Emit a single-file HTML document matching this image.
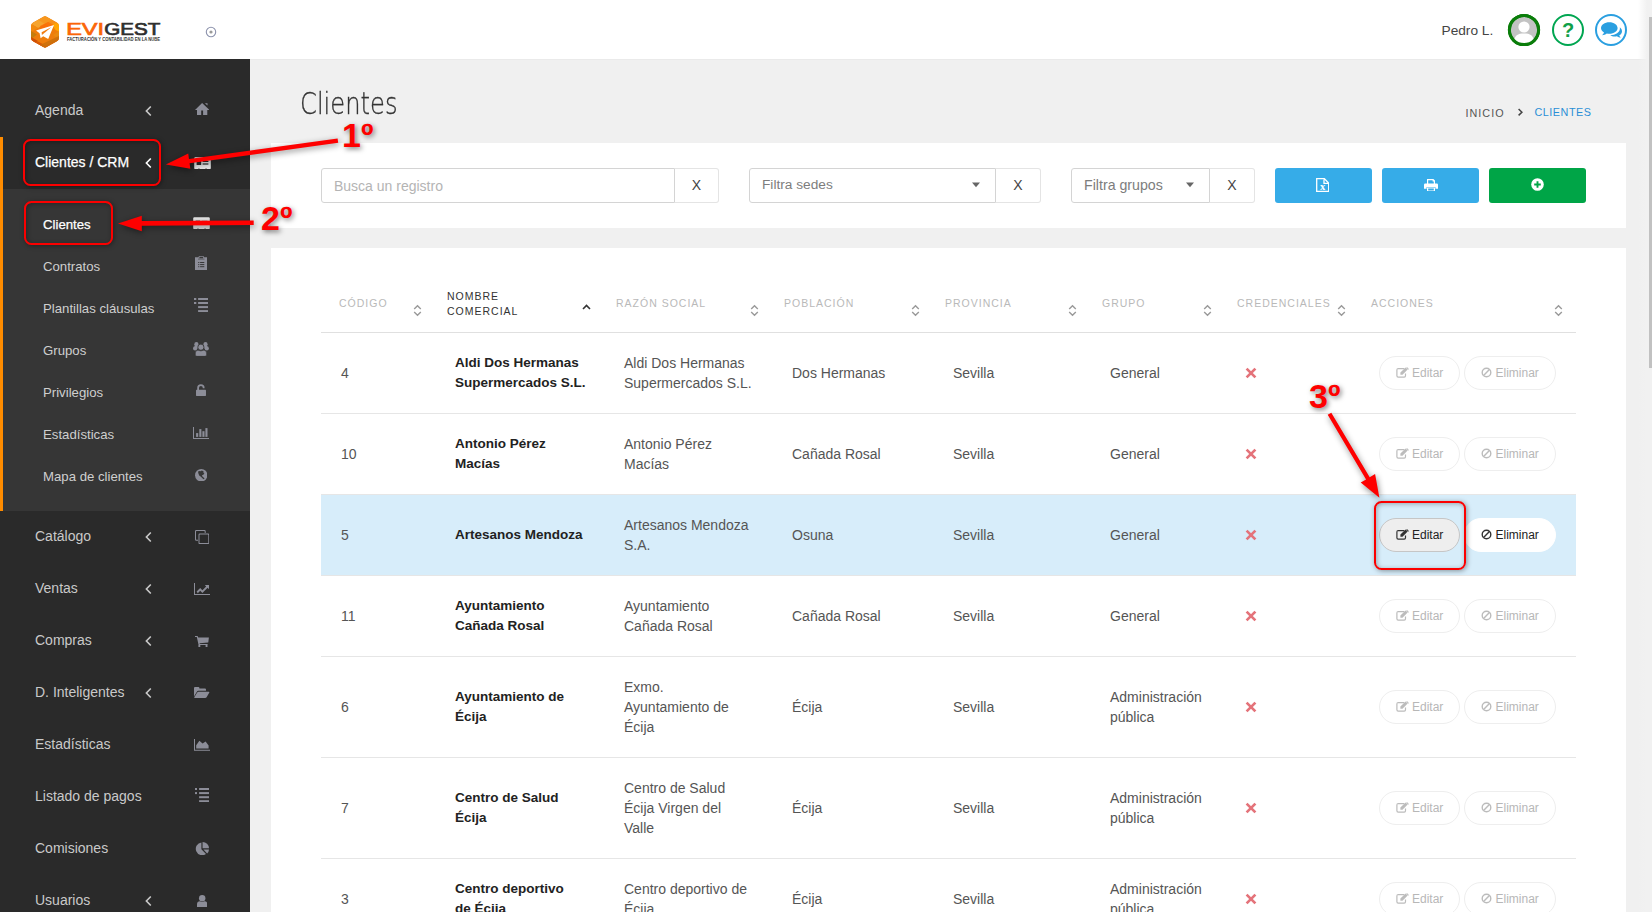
<!DOCTYPE html>
<html lang="es"><head><meta charset="utf-8"><title>Clientes</title>
<style>
*{box-sizing:border-box;margin:0;padding:0}
html,body{width:1652px;height:912px;overflow:hidden;background:#f0f0f0;font-family:"Liberation Sans",sans-serif;color:#444}
body{position:relative}
.a{position:absolute}
.t{position:absolute;white-space:nowrap;line-height:20px}
#hdr{left:0;top:0;width:1647px;height:59px;background:#fff}
#side{left:0;top:59px;width:250px;height:853px;background:#2a2a2a}
#sub{left:0;top:189px;width:250px;height:322px;background:#363636}
#obar{left:0;top:137px;width:3px;height:374px;background:#ff8c00}
.mi{left:35px;font-size:14px;color:#c9c9c9}
.si{left:43px;font-size:13.2px;color:#cfcfcf}
.on{color:#fff;-webkit-text-stroke:.25px #fff}
.card{background:#fff}
.inp{border:1px solid #d4d4d4;border-radius:3px 0 0 3px;background:#fff}
.xb{border:1px solid #e4e4e4;border-left:0;border-radius:0 3px 3px 0;background:#fff;font-size:14px;color:#444;text-align:center;line-height:33px}
.btn{border-radius:3px}
.th{font-size:10.5px;letter-spacing:1px;color:#b9b9b9;line-height:15px}
.td{font-size:14px;color:#555;line-height:20px}
.b{font-weight:700;color:#222;font-size:13.5px}
.hr{left:321px;width:1255px;height:1px;background:#e6e6e6}
.pill{height:34px;border-radius:17px;border:1px solid #eee;background:#fff}
.pt{font-size:12px;color:#b9b9b9;line-height:14px}
.red{color:#fe0000;font-weight:700;text-shadow:1.5px 1.5px 5px rgba(0,0,0,.5)}
.rbox{border:2.3px solid #fb0000;border-radius:7.5px;box-shadow:1px 1px 5px rgba(0,0,0,.38),inset 1px 1px 5px rgba(0,0,0,.3)}
</style></head><body>
<div class="a" id="hdr"></div><div class="a" style="left:250px;top:59px;width:1397px;height:1px;background:#eaeaea"></div>
<svg class="a" style="left:28px;top:12px" width="140" height="40" viewBox="0 0 140 40">
<defs><clipPath id="hx"><path d="M14.92 4.90 Q17.00 3.70 19.08 4.90 L28.92 10.58 Q31.00 11.78 31.00 14.18 L31.00 25.53 Q31.00 27.93 28.92 29.13 L19.08 34.80 Q17.00 36.00 14.92 34.80 L5.08 29.13 Q3.00 27.93 3.00 25.53 L3.00 14.18 Q3.00 11.78 5.08 10.58 Z"/></clipPath></defs>
<g clip-path="url(#hx)"><rect x="0" y="0" width="34" height="40" fill="#ee7d0c"/>
<path d="M0 0 H34 V12 L17 3 Z" fill="#f59a1f"/><path d="M3 11.8 L17 3.7 L24 7.8 L10 16 Z" fill="#f6a42e"/><path d="M17 3.7 L31 11.8 L24 16 L10 7.8 Z" fill="#f7941a" opacity=".8"/>
<path d="M24 12 L31 11 V20 L27 17.5 Z" fill="#ffa600"/><path d="M3 12 L10 16 L3 20 Z" fill="#f28a0f"/>
<path d="M3 19 L9 22.5 L3 27 Z" fill="#c47d0e"/><path d="M31 19 L25 23 L31 27.5 Z" fill="#e98a10"/>
<path d="M3 26 L17 34 L31 26 V40 H3 Z" fill="#e0640a"/><path d="M3 25 L10 29 L3 33 Z" fill="#cf4f05"/><path d="M10 29.5 L24 37 L14 38 L3 31 Z" fill="#d95a06"/><path d="M17 36 L31 27.9 V24 L12 33 Z" fill="#c9700c" opacity=".85"/>
<path d="M12 14 L20 10 L26 13 L14 20 Z" fill="#fb6d06" opacity=".8"/></g>
<path d="M8 18.6 L26 13 L20.2 27 L15.2 24.2 L12.6 26.2 L11.6 21.3 Z" fill="#fff"/>
<path d="M13.6 20.3 L23.6 15 L13.9 22.9 Z" fill="#f07c10"/>
<text x="38.2" y="22.6" font-family="Liberation Sans, sans-serif" font-size="15.9" textLength="37.9" lengthAdjust="spacingAndGlyphs" fill="#fb6508" stroke="#fb6508" stroke-width="0.65">EVI</text>
<text x="76.2" y="22.6" font-family="Liberation Sans, sans-serif" font-size="15.9" textLength="56.1" lengthAdjust="spacingAndGlyphs" fill="#2e2e2e" stroke="#2e2e2e" stroke-width="0.65">GEST</text>
<text x="39" y="28.9" font-family="Liberation Sans, sans-serif" font-size="4.6" font-weight="700" textLength="93" lengthAdjust="spacingAndGlyphs" fill="#333">FACTURACIÓN Y CONTABILIDAD EN LA NUBE</text>
</svg>
<svg class="a" style="left:204px;top:25px" width="14" height="14" viewBox="0 0 14 14"><circle cx="7" cy="7" r="4.7" fill="none" stroke="#8d93ad" stroke-width="1.1"/><circle cx="7" cy="7" r="1.6" fill="#9a9a9a"/></svg>
<div class="t" style="left:1441.5px;top:20.6px;font-size:13.7px;color:#444">Pedro L.</div>
<svg class="a" style="left:1507px;top:13px" width="34" height="34" viewBox="0 0 34 34"><defs><clipPath id="cp"><circle cx="17" cy="17" r="14"/></clipPath></defs>
<circle cx="17" cy="17" r="14.6" fill="#c3c3c3" stroke="#0a7d0a" stroke-width="3"/>
<g clip-path="url(#cp)"><circle cx="17" cy="14" r="5.6" fill="#fff"/><path d="M6.5 32 C6.5 22 11 20.5 17 20.5 C23 20.5 27.5 22 27.5 32 Z" fill="#fff"/></g>
<circle cx="17" cy="17" r="14.6" fill="none" stroke="#0a7d0a" stroke-width="3"/></svg>
<div class="a" style="left:1552px;top:14px;width:32px;height:32px;border-radius:50%;border:2px solid #00a651;text-align:center;font-size:20px;font-weight:700;color:#10a04a;line-height:29px">?</div>
<svg class="a" style="left:1595px;top:14px" width="32" height="32" viewBox="0 0 32 32"><circle cx="16" cy="16" r="15" fill="#fff" stroke="#2a9fe0" stroke-width="2"/>
<path d="M24.8 13.2 C26.2 14.3 27 15.7 27 17.2 C27 18.9 25.9 20.5 24.2 21.5 C24.5 22.3 25 23 25.8 23.6 C24.4 23.6 23 23.1 21.9 22.3 C21.2 22.5 20.5 22.5 19.8 22.5 C18 22.5 16.4 22 15.2 21.2 C20.6 21.2 24.9 18.3 24.9 14.5 C24.9 14.1 24.9 13.6 24.8 13.2 Z" fill="#2a9fe0"/>
<path d="M14.3 8.2 C18.9 8.2 22.6 10.8 22.6 14 C22.6 17.2 18.9 19.8 14.3 19.8 C13.4 19.8 12.6 19.7 11.8 19.5 C10.5 20.5 8.8 21.1 7 21.2 C8 20.4 8.7 19.5 9 18.4 C7.2 17.3 6 15.8 6 14 C6 10.8 9.7 8.2 14.3 8.2 Z" fill="#2a9fe0"/></svg>
<div class="a" id="side"></div><div class="a" id="sub"></div><div class="a" id="obar"></div>
<div class="t mi" style="top:100px">Agenda</div>
<svg class="a" style="left:144px;top:104.5px" width="9" height="12" viewBox="0 0 9 12"><path d="M6.8 1.5 L2.4 6 L6.8 10.5" fill="none" stroke="#c9c9c9" stroke-width="1.6"/></svg>
<div class="t mi on" style="top:152px">Clientes / CRM</div>
<svg class="a" style="left:144px;top:156.5px" width="9" height="12" viewBox="0 0 9 12"><path d="M6.8 1.5 L2.4 6 L6.8 10.5" fill="none" stroke="#fff" stroke-width="1.6"/></svg>
<div class="t mi" style="top:526px">Catálogo</div>
<svg class="a" style="left:144px;top:530.5px" width="9" height="12" viewBox="0 0 9 12"><path d="M6.8 1.5 L2.4 6 L6.8 10.5" fill="none" stroke="#c9c9c9" stroke-width="1.6"/></svg>
<div class="t mi" style="top:578px">Ventas</div>
<svg class="a" style="left:144px;top:582.5px" width="9" height="12" viewBox="0 0 9 12"><path d="M6.8 1.5 L2.4 6 L6.8 10.5" fill="none" stroke="#c9c9c9" stroke-width="1.6"/></svg>
<div class="t mi" style="top:630px">Compras</div>
<svg class="a" style="left:144px;top:634.5px" width="9" height="12" viewBox="0 0 9 12"><path d="M6.8 1.5 L2.4 6 L6.8 10.5" fill="none" stroke="#c9c9c9" stroke-width="1.6"/></svg>
<div class="t mi" style="top:682px">D. Inteligentes</div>
<svg class="a" style="left:144px;top:686.5px" width="9" height="12" viewBox="0 0 9 12"><path d="M6.8 1.5 L2.4 6 L6.8 10.5" fill="none" stroke="#c9c9c9" stroke-width="1.6"/></svg>
<div class="t mi" style="top:734px">Estadísticas</div>
<div class="t mi" style="top:786px">Listado de pagos</div>
<div class="t mi" style="top:838px">Comisiones</div>
<div class="t mi" style="top:890px">Usuarios</div>
<svg class="a" style="left:144px;top:894.5px" width="9" height="12" viewBox="0 0 9 12"><path d="M6.8 1.5 L2.4 6 L6.8 10.5" fill="none" stroke="#c9c9c9" stroke-width="1.6"/></svg>
<div class="t si on" style="top:214.7px">Clientes</div>
<div class="t si" style="top:256.7px">Contratos</div>
<div class="t si" style="top:298.7px">Plantillas cláusulas</div>
<div class="t si" style="top:340.7px">Grupos</div>
<div class="t si" style="top:382.7px">Privilegios</div>
<div class="t si" style="top:424.7px">Estadísticas</div>
<div class="t si" style="top:466.7px">Mapa de clientes</div>
<svg class="a" style="left:194.9px;top:102.7px" width="14.3" height="12.4" viewBox="0 0 14.3 12.4" fill="#8c8d98"><path d="M7.1 0.1 L14.3 6.9 H12.3 V12.4 H8.1 V7.5 H6.2 V12.4 H2 V6.9 H0 Z"/><path d="M9.9 0.2 H12.5 V2.6 Z"/></svg>
<svg class="a" style="left:193.5px;top:156.8px" width="17.0" height="12.4" viewBox="0 0 17.0 12.4" fill="#e6e6e6"><rect x="0.2" y="0.2" width="16.6" height="12" rx="1.2"/><rect x="2.6" y="3.6" width="4.6" height="4.4" fill="#2b2b2b"/><rect x="8.6" y="3.8" width="5.8" height="1.2" fill="#2b2b2b"/><rect x="8.6" y="6.4" width="5.8" height="1.2" fill="#2b2b2b"/><rect x="4.5" y="11.3" width="0.9" height="1" fill="#2b2b2b"/><rect x="11.6" y="11.3" width="0.9" height="1" fill="#2b2b2b"/></svg>
<svg class="a" style="left:192.5px;top:216.7px" width="17.0" height="12.4" viewBox="0 0 17.0 12.4" fill="#e6e6e6"><rect x="0.2" y="0.2" width="16.6" height="12" rx="1.2"/><rect x="2.6" y="3.6" width="4.6" height="4.4" fill="#373737"/><rect x="8.6" y="3.8" width="5.8" height="1.2" fill="#373737"/><rect x="8.6" y="6.4" width="5.8" height="1.2" fill="#373737"/><rect x="4.5" y="11.3" width="0.9" height="1" fill="#373737"/><rect x="11.6" y="11.3" width="0.9" height="1" fill="#373737"/></svg>
<svg class="a" style="left:194.8px;top:255.8px" width="12.5" height="14.3" viewBox="0 0 12.5 14.3" fill="#8c8d98"><path d="M0 1.3 H3.6 V0.9 Q3.6 0 4.5 0 H8 Q8.9 0 8.9 0.9 V1.3 H12.5 V14.3 H0 Z"/><rect x="4.4" y="0.7" width="3.7" height="1.6" fill="#373737"/><g fill="#373737"><rect x="3.2" y="6" width="1.1" height="1"/><rect x="5.1" y="6" width="4.2" height="1"/><rect x="3.2" y="8.1" width="1.1" height="1"/><rect x="5.1" y="8.1" width="4.2" height="1"/><rect x="3.2" y="10.2" width="1.1" height="1"/><rect x="5.1" y="10.2" width="4.2" height="1"/></g><rect x="4.4" y="2.3" width="3.7" height="0.01"/><path d="M3 2.6 H9.5 V3.6 H3 Z" fill="#373737" opacity=".55"/></svg>
<svg class="a" style="left:193.8px;top:298.0px" width="14.2" height="14.2" viewBox="0 0 14.2 14.2" fill="#8c8d98"><rect x="4.1" y="0" width="10.1" height="2"/><rect x="4.1" y="4" width="10.1" height="2"/><rect x="4.1" y="8.1" width="10.1" height="2"/><rect x="4.1" y="12.1" width="10.1" height="2"/><rect x="0" y="0" width="2.3" height="2"/><rect x="0" y="4" width="2.3" height="2"/></svg>
<svg class="a" style="left:193.0px;top:341.8px" width="15.8" height="14.3" viewBox="0 0 15.8 14.3" fill="#8c8d98"><circle cx="3.4" cy="2.2" r="2.1"/><circle cx="12.5" cy="2.2" r="2.1"/><circle cx="2.1" cy="6.4" r="2.1"/><circle cx="13.8" cy="6.4" r="2.1"/><rect x="1.6" y="3.4" width="3.6" height="3"/><rect x="10.7" y="3.4" width="3.6" height="3"/><circle cx="7.9" cy="5.2" r="3.1" stroke="#373737" stroke-width="0.9"/><path d="M2.4 12.8 V11 Q2.4 8.3 5 8.2 Q7.9 9.8 10.8 8.2 Q13.5 8.3 13.5 11 V12.8 Q13.5 14.3 12 14.3 H3.9 Q2.4 14.3 2.4 12.8 Z" stroke="#373737" stroke-width="0.5"/></svg>
<svg class="a" style="left:196.1px;top:384.1px" width="10.0" height="11.9" viewBox="0 0 10.0 11.9" fill="#8c8d98"><rect x="0" y="5.8" width="10" height="6.1" rx="0.6"/><path d="M1.2 6 V3.9 A3.7 3.7 0 0 1 8.6 3.9 V4.3 H6.8 V3.9 A1.9 1.9 0 0 0 3 3.9 V6 Z"/></svg>
<svg class="a" style="left:192.7px;top:426.9px" width="16.5" height="11.9" viewBox="0 0 16.5 11.9" fill="#8c8d98"><path d="M0 0 H1 V10.9 H16.5 V11.9 H0 Z"/><rect x="3.1" y="6.1" width="2.1" height="3.8"/><rect x="6.3" y="2.1" width="2.1" height="7.8"/><rect x="9.4" y="4.2" width="2.1" height="5.7"/><rect x="12.4" y="1.1" width="2.1" height="8.8"/></svg>
<svg class="a" style="left:194.8px;top:468.7px" width="12.5" height="12.5" viewBox="0 0 12.5 12.5" fill="#8c8d98"><circle cx="6.25" cy="6.25" r="6.2"/><path d="M3 2.4 Q4.6 1.6 6 2.2 L6.6 1.4 L8.6 2.2 L8.2 3.4 L9.4 4 L8.4 5.8 L7 6.2 L7.4 7.6 L8.6 8.4 L9.6 9.6 L8.4 10.2 L7.2 9 L5.6 7.6 L4.2 6.4 L3.4 4.6 Z" fill="#373737"/></svg>
<svg class="a" style="left:195.0px;top:530.0px" width="14.3" height="14.1" viewBox="0 0 14.3 14.1" fill="#8c8d98"><path d="M1.2 0 H9.5 Q10.7 0 10.7 1.2 V3 H9.7 V1.4 Q9.7 1 9.3 1 H1.4 Q1 1 1 1.4 V9.3 Q1 9.7 1.4 9.7 H3 V10.7 H1.2 Q0 10.7 0 9.5 V1.2 Q0 0 1.2 0 Z"/><path d="M4.7 3.5 H13.1 Q14.3 3.5 14.3 4.7 V12.9 Q14.3 14.1 13.1 14.1 H4.7 Q3.5 14.1 3.5 12.9 V4.7 Q3.5 3.5 4.7 3.5 Z M4.9 4.5 Q4.5 4.5 4.5 4.9 V12.7 Q4.5 13.1 4.9 13.1 H12.9 Q13.3 13.1 13.3 12.7 V4.9 Q13.3 4.5 12.9 4.5 Z" fill-rule="evenodd"/></svg>
<svg class="a" style="left:193.9px;top:583.0px" width="16.1" height="12.0" viewBox="0 0 16.1 12.0" fill="#8c8d98"><path d="M0 0 H1 V11 H16.1 V12 H0 Z"/><path d="M2.6 8.6 L6.2 5 L8.4 7.2 L12.2 3.4 L10.8 2 H15 V6.2 L13.6 4.8 L8.4 10 L6.2 7.8 L3.8 10.2 Z"/></svg>
<svg class="a" style="left:195.4px;top:635.9px" width="13.9" height="11.2" viewBox="0 0 13.9 11.2" fill="#8c8d98"><path d="M0 0 H2.6 L3.2 1.5 H13.9 L13.3 6.4 L4.6 7.3 L4.8 8 H12.6 V9 H3.6 L1.8 1 H0 Z"/><rect x="3.4" y="9" width="1.9" height="2.2"/><rect x="10.6" y="9" width="1.9" height="2.2"/></svg>
<svg class="a" style="left:194.2px;top:687.3px" width="15.4" height="11.0" viewBox="0 0 15.4 11.0" fill="#8c8d98"><path d="M0 1 Q0 0 1 0 H4.4 Q5.4 0 5.4 1 V1.6 H11 Q12 1.6 12 2.6 V3.8 H4.4 Q3.4 3.8 2.9 4.7 L0 9.6 Z"/><path d="M4.6 4.8 H14.8 Q15.8 4.8 15.2 5.8 L12.6 10.2 Q12.1 11 11.2 11 H0.8 Q-0.1 11 0.4 10.1 L3.2 5.6 Q3.7 4.8 4.6 4.8 Z"/></svg>
<svg class="a" style="left:193.9px;top:739.2px" width="16.1" height="11.8" viewBox="0 0 16.1 11.8" fill="#8c8d98"><path d="M0 0 H1 V10.8 H16.1 V11.8 H0 Z"/><path d="M2.2 9.6 V6.2 L5.4 1.8 L8.6 4.6 L11.6 2.4 L14.6 6.6 V9.6 Z"/></svg>
<svg class="a" style="left:195.0px;top:787.8px" width="14.3" height="14.3" viewBox="0 0 14.3 14.3" fill="#8c8d98"><rect x="4.1" y="0" width="10.2" height="2"/><rect x="4.1" y="4.1" width="10.2" height="2"/><rect x="4.1" y="8.2" width="10.2" height="2"/><rect x="4.1" y="12.2" width="10.2" height="2"/><rect x="0" y="0" width="2" height="2"/><rect x="0" y="4.1" width="2" height="2"/></svg>
<svg class="a" style="left:194.7px;top:841.7px" width="14.2" height="13.5" viewBox="0 0 14.2 13.5" fill="#8c8d98"><path d="M6.4 0.5 V7.2 L11 12 A6.4 6.4 0 1 1 6.4 0.5 Z"/><path d="M7.6 0 A6.4 6.4 0 0 1 14 6.2 H7.6 Z"/><path d="M8.4 7.4 H14 A6.4 6.4 0 0 1 12.2 11.4 Z"/></svg>
<svg class="a" style="left:196.9px;top:894.8px" width="10.4" height="12.6" viewBox="0 0 10.4 12.6" fill="#8c8d98"><circle cx="5.2" cy="3.3" r="3.2"/><path d="M0 12.6 V9.4 Q0 6.4 3 6.3 Q5.2 7.8 7.4 6.3 Q10.4 6.4 10.4 9.4 V12.6 Q10.4 12.6 9.4 12.6 H1 Q0 12.6 0 12.6 Z"/></svg>
<div class="t" style="left:300.3px;top:84.6px;font-family:'DejaVu Sans Light','DejaVu Sans','Liberation Sans',sans-serif;font-weight:200;font-size:29.3px;line-height:38px;color:#333;-webkit-text-stroke:.3px #333;transform:scaleX(.826);transform-origin:0 0">Clientes</div>
<div class="t" style="left:1465.4px;top:103.4px;font-size:10.8px;letter-spacing:1.05px;color:#555">INICIO</div>
<svg class="a" style="left:1516px;top:107px" width="9" height="10" viewBox="0 0 9 10"><path d="M2.6 2 L5.9 5.2 L2.6 8.4" fill="none" stroke="#444" stroke-width="1.5"/></svg>
<div class="t" style="left:1534.4px;top:102.4px;font-size:10.8px;letter-spacing:.55px;color:#2b8fd6">CLIENTES</div>
<div class="a card" style="left:271px;top:143px;width:1355px;height:85px"></div>
<div class="a inp" style="left:321px;top:168px;width:354px;height:35px"></div><div class="t" style="left:334px;top:175.5px;font-size:14px;color:#b4b4b4">Busca un registro</div><div class="a xb" style="left:675px;top:168px;width:44px;height:35px">X</div>
<div class="a inp" style="left:749px;top:168px;width:247px;height:35px"></div><div class="t" style="left:762px;top:174.7px;font-size:13.7px;color:#7d7d7d">Filtra sedes</div><svg class="a" style="left:971px;top:182px" width="10" height="6" viewBox="0 0 10 6"><path d="M1 0.6 H9 L5 5.2 Z" fill="#666"/></svg><div class="a xb" style="left:996px;top:168px;width:45px;height:35px">X</div>
<div class="a inp" style="left:1071px;top:168px;width:139px;height:35px"></div><div class="t" style="left:1084px;top:174.7px;font-size:14.2px;color:#7d7d7d">Filtra grupos</div><svg class="a" style="left:1185px;top:182px" width="10" height="6" viewBox="0 0 10 6"><path d="M1 0.6 H9 L5 5.2 Z" fill="#666"/></svg><div class="a xb" style="left:1210px;top:168px;width:45px;height:35px">X</div>
<div class="a btn" style="left:1275px;top:168px;width:97px;height:35px;background:#36ace8"></div>
<svg class="a" style="left:1316px;top:178px" width="13.4" height="14" viewBox="0 0 13.4 14"><path d="M0.7 0.7 H8.4 L12.7 5 V13.3 H0.7 Z M8 1.4 V5.4 H12" fill="none" stroke="#fff" stroke-width="1.3"/><text x="6.6" y="12" text-anchor="middle" font-family="Liberation Serif, serif" font-weight="700" font-size="10.5" fill="#fff">x</text></svg>
<div class="a btn" style="left:1382px;top:168px;width:97px;height:35px;background:#36ace8"></div>
<svg class="a" style="left:1424.2px;top:178.6px" width="14" height="12.6" viewBox="0 0 14 12.6" fill="#fff"><path d="M3 0 H9.4 L11 1.6 V5 H9.8 V2.4 H8.6 V1.2 H4.2 V5 H3 Z"/><path d="M1.2 4.6 H12.8 Q14 4.6 14 5.8 V9.8 H11.4 V8 H2.6 V9.8 H0 V5.8 Q0 4.6 1.2 4.6 Z"/><path d="M3 8.6 H11 V12.6 H3 Z M4.2 9.6 V11.5 H9.8 V9.6 Z" fill-rule="evenodd"/></svg>
<div class="a btn" style="left:1489px;top:168px;width:97px;height:35px;background:#00a547"></div>
<svg class="a" style="left:1531.1px;top:178.2px" width="13" height="13" viewBox="0 0 13 13"><circle cx="6.5" cy="6.5" r="6.3" fill="#fff"/><path d="M6.5 3.2 V9.8 M3.2 6.5 H9.8" stroke="#00a547" stroke-width="1.9" fill="none"/></svg>
<div class="a card" style="left:271px;top:248px;width:1355px;height:664px"></div>
<div class="t th" style="left:339px;top:296px">CÓDIGO</div>
<svg class="a" style="left:413.0px;top:304px" width="9" height="13" viewBox="0 0 9 13"><path d="M1.2 5 L4.5 1.7 L7.8 5 M1.2 8 L4.5 11.3 L7.8 8" fill="none" stroke="#9a9a9a" stroke-width="1.4"/></svg>
<div class="t th" style="left:616px;top:296px">RAZÓN SOCIAL</div>
<svg class="a" style="left:750.0px;top:304px" width="9" height="13" viewBox="0 0 9 13"><path d="M1.2 5 L4.5 1.7 L7.8 5 M1.2 8 L4.5 11.3 L7.8 8" fill="none" stroke="#9a9a9a" stroke-width="1.4"/></svg>
<div class="t th" style="left:784px;top:296px">POBLACIÓN</div>
<svg class="a" style="left:911.0px;top:304px" width="9" height="13" viewBox="0 0 9 13"><path d="M1.2 5 L4.5 1.7 L7.8 5 M1.2 8 L4.5 11.3 L7.8 8" fill="none" stroke="#9a9a9a" stroke-width="1.4"/></svg>
<div class="t th" style="left:945px;top:296px">PROVINCIA</div>
<svg class="a" style="left:1067.9px;top:304px" width="9" height="13" viewBox="0 0 9 13"><path d="M1.2 5 L4.5 1.7 L7.8 5 M1.2 8 L4.5 11.3 L7.8 8" fill="none" stroke="#9a9a9a" stroke-width="1.4"/></svg>
<div class="t th" style="left:1102px;top:296px">GRUPO</div>
<svg class="a" style="left:1203.0px;top:304px" width="9" height="13" viewBox="0 0 9 13"><path d="M1.2 5 L4.5 1.7 L7.8 5 M1.2 8 L4.5 11.3 L7.8 8" fill="none" stroke="#9a9a9a" stroke-width="1.4"/></svg>
<div class="t th" style="left:1237px;top:296px">CREDENCIALES</div>
<svg class="a" style="left:1337.0px;top:304px" width="9" height="13" viewBox="0 0 9 13"><path d="M1.2 5 L4.5 1.7 L7.8 5 M1.2 8 L4.5 11.3 L7.8 8" fill="none" stroke="#9a9a9a" stroke-width="1.4"/></svg>
<div class="t th" style="left:1371px;top:296px">ACCIONES</div>
<svg class="a" style="left:1553.5px;top:304px" width="9" height="13" viewBox="0 0 9 13"><path d="M1.2 5 L4.5 1.7 L7.8 5 M1.2 8 L4.5 11.3 L7.8 8" fill="none" stroke="#9a9a9a" stroke-width="1.4"/></svg>
<div class="t th" style="left:447px;top:288.8px;color:#333">NOMBRE<br>COMERCIAL</div>
<svg class="a" style="left:582px;top:303px" width="9" height="8" viewBox="0 0 9 8"><path d="M1 6 L4.5 2.4 L8 6" fill="none" stroke="#333" stroke-width="1.6"/></svg>
<div class="a hr" style="top:331.5px;background:#e0e0e0;height:1px"></div>
<div class="a hr" style="top:413px"></div>
<div class="t td" style="left:341px;top:363px">4</div>
<div class="t td b" style="left:455px;top:353px">Aldi Dos Hermanas<br>Supermercados S.L.</div>
<div class="t td" style="left:624px;top:353px">Aldi Dos Hermanas<br>Supermercados S.L.</div>
<div class="t td" style="left:792px;top:363px">Dos Hermanas</div>
<div class="t td" style="left:953px;top:363px">Sevilla</div>
<div class="t td" style="left:1110px;top:363px">General</div>
<svg class="a" style="left:1244.5px;top:366.5px" width="12" height="12" viewBox="0 0 12 12"><path d="M1.6 1.6 L10.4 10.4 M10.4 1.6 L1.6 10.4" stroke="#e4737a" stroke-width="2.7" fill="none"/></svg>
<div class="a pill" style="left:1379.2px;top:355.5px;width:80.6px"></div>
<div class="a pill" style="left:1464.2px;top:355.5px;width:91.6px"></div>
<svg class="a" style="left:1395.5px;top:367.2px" width="13" height="11" viewBox="0 0 13 11"><path d="M8.4 1.6 H2.2 Q0.9 1.6 0.9 2.9 V8.8 Q0.9 10.1 2.2 10.1 H8.2 Q9.5 10.1 9.5 8.8 V6.6" fill="none" stroke="#bcbcbc" stroke-width="1.2"/><path d="M4.4 5.6 L9.6 0.5 L11.7 2.6 L6.5 7.8 H4.4 Z" fill="#bcbcbc"/><path d="M10.3 0 L11 -0.6 L12.9 1.3 L12.2 2 Z" fill="#bcbcbc" transform="translate(0,0.7)"/></svg>
<div class="t pt" style="left:1412px;top:365.5px;color:#b7b7b7">Editar</div>
<svg class="a" style="left:1481px;top:367.0px" width="11" height="11" viewBox="0 0 11 11"><circle cx="5.5" cy="5.5" r="4.3" fill="none" stroke="#bcbcbc" stroke-width="1.4"/><path d="M2.6 8.4 L8.4 2.6" stroke="#bcbcbc" stroke-width="1.4"/></svg>
<div class="t pt" style="left:1495.5px;top:365.5px;color:#b7b7b7">Eliminar</div>
<div class="a hr" style="top:494px"></div>
<div class="t td" style="left:341px;top:444px">10</div>
<div class="t td b" style="left:455px;top:434px">Antonio Pérez<br>Macías</div>
<div class="t td" style="left:624px;top:434px">Antonio Pérez<br>Macías</div>
<div class="t td" style="left:792px;top:444px">Cañada Rosal</div>
<div class="t td" style="left:953px;top:444px">Sevilla</div>
<div class="t td" style="left:1110px;top:444px">General</div>
<svg class="a" style="left:1244.5px;top:447.5px" width="12" height="12" viewBox="0 0 12 12"><path d="M1.6 1.6 L10.4 10.4 M10.4 1.6 L1.6 10.4" stroke="#e4737a" stroke-width="2.7" fill="none"/></svg>
<div class="a pill" style="left:1379.2px;top:436.5px;width:80.6px"></div>
<div class="a pill" style="left:1464.2px;top:436.5px;width:91.6px"></div>
<svg class="a" style="left:1395.5px;top:448.2px" width="13" height="11" viewBox="0 0 13 11"><path d="M8.4 1.6 H2.2 Q0.9 1.6 0.9 2.9 V8.8 Q0.9 10.1 2.2 10.1 H8.2 Q9.5 10.1 9.5 8.8 V6.6" fill="none" stroke="#bcbcbc" stroke-width="1.2"/><path d="M4.4 5.6 L9.6 0.5 L11.7 2.6 L6.5 7.8 H4.4 Z" fill="#bcbcbc"/><path d="M10.3 0 L11 -0.6 L12.9 1.3 L12.2 2 Z" fill="#bcbcbc" transform="translate(0,0.7)"/></svg>
<div class="t pt" style="left:1412px;top:446.5px;color:#b7b7b7">Editar</div>
<svg class="a" style="left:1481px;top:448.0px" width="11" height="11" viewBox="0 0 11 11"><circle cx="5.5" cy="5.5" r="4.3" fill="none" stroke="#bcbcbc" stroke-width="1.4"/><path d="M2.6 8.4 L8.4 2.6" stroke="#bcbcbc" stroke-width="1.4"/></svg>
<div class="t pt" style="left:1495.5px;top:446.5px;color:#b7b7b7">Eliminar</div>
<div class="a" style="left:321px;top:495px;width:1255px;height:80px;background:#d7edfa"></div>
<div class="a hr" style="top:575px"></div>
<div class="t td" style="left:341px;top:525px">5</div>
<div class="t td b" style="left:455px;top:525px">Artesanos Mendoza</div>
<div class="t td" style="left:624px;top:515px">Artesanos Mendoza<br>S.A.</div>
<div class="t td" style="left:792px;top:525px">Osuna</div>
<div class="t td" style="left:953px;top:525px">Sevilla</div>
<div class="t td" style="left:1110px;top:525px">General</div>
<svg class="a" style="left:1244.5px;top:528.5px" width="12" height="12" viewBox="0 0 12 12"><path d="M1.6 1.6 L10.4 10.4 M10.4 1.6 L1.6 10.4" stroke="#e4737a" stroke-width="2.7" fill="none"/></svg>
<div class="a pill" style="left:1379.2px;top:517.5px;width:80.6px;background:#eeeeee;border-color:#c6c6c6"></div>
<div class="a pill" style="left:1464.2px;top:517.5px;width:91.6px;border-color:#fff"></div>
<svg class="a" style="left:1395.5px;top:529.2px" width="13" height="11" viewBox="0 0 13 11"><path d="M8.4 1.6 H2.2 Q0.9 1.6 0.9 2.9 V8.8 Q0.9 10.1 2.2 10.1 H8.2 Q9.5 10.1 9.5 8.8 V6.6" fill="none" stroke="#333" stroke-width="1.2"/><path d="M4.4 5.6 L9.6 0.5 L11.7 2.6 L6.5 7.8 H4.4 Z" fill="#333"/><path d="M10.3 0 L11 -0.6 L12.9 1.3 L12.2 2 Z" fill="#333" transform="translate(0,0.7)"/></svg>
<div class="t pt" style="left:1412px;top:527.5px;color:#222">Editar</div>
<svg class="a" style="left:1481px;top:529.0px" width="11" height="11" viewBox="0 0 11 11"><circle cx="5.5" cy="5.5" r="4.3" fill="none" stroke="#333" stroke-width="1.4"/><path d="M2.6 8.4 L8.4 2.6" stroke="#333" stroke-width="1.4"/></svg>
<div class="t pt" style="left:1495.5px;top:527.5px;color:#222">Eliminar</div>
<div class="a hr" style="top:656px"></div>
<div class="t td" style="left:341px;top:606px">11</div>
<div class="t td b" style="left:455px;top:596px">Ayuntamiento<br>Cañada Rosal</div>
<div class="t td" style="left:624px;top:596px">Ayuntamiento<br>Cañada Rosal</div>
<div class="t td" style="left:792px;top:606px">Cañada Rosal</div>
<div class="t td" style="left:953px;top:606px">Sevilla</div>
<div class="t td" style="left:1110px;top:606px">General</div>
<svg class="a" style="left:1244.5px;top:609.5px" width="12" height="12" viewBox="0 0 12 12"><path d="M1.6 1.6 L10.4 10.4 M10.4 1.6 L1.6 10.4" stroke="#e4737a" stroke-width="2.7" fill="none"/></svg>
<div class="a pill" style="left:1379.2px;top:598.5px;width:80.6px"></div>
<div class="a pill" style="left:1464.2px;top:598.5px;width:91.6px"></div>
<svg class="a" style="left:1395.5px;top:610.2px" width="13" height="11" viewBox="0 0 13 11"><path d="M8.4 1.6 H2.2 Q0.9 1.6 0.9 2.9 V8.8 Q0.9 10.1 2.2 10.1 H8.2 Q9.5 10.1 9.5 8.8 V6.6" fill="none" stroke="#bcbcbc" stroke-width="1.2"/><path d="M4.4 5.6 L9.6 0.5 L11.7 2.6 L6.5 7.8 H4.4 Z" fill="#bcbcbc"/><path d="M10.3 0 L11 -0.6 L12.9 1.3 L12.2 2 Z" fill="#bcbcbc" transform="translate(0,0.7)"/></svg>
<div class="t pt" style="left:1412px;top:608.5px;color:#b7b7b7">Editar</div>
<svg class="a" style="left:1481px;top:610.0px" width="11" height="11" viewBox="0 0 11 11"><circle cx="5.5" cy="5.5" r="4.3" fill="none" stroke="#bcbcbc" stroke-width="1.4"/><path d="M2.6 8.4 L8.4 2.6" stroke="#bcbcbc" stroke-width="1.4"/></svg>
<div class="t pt" style="left:1495.5px;top:608.5px;color:#b7b7b7">Eliminar</div>
<div class="a hr" style="top:757px"></div>
<div class="t td" style="left:341px;top:697px">6</div>
<div class="t td b" style="left:455px;top:687px">Ayuntamiento de<br>Écija</div>
<div class="t td" style="left:624px;top:677px">Exmo.<br>Ayuntamiento de<br>Écija</div>
<div class="t td" style="left:792px;top:697px">Écija</div>
<div class="t td" style="left:953px;top:697px">Sevilla</div>
<div class="t td" style="left:1110px;top:687px">Administración<br>pública</div>
<svg class="a" style="left:1244.5px;top:700.5px" width="12" height="12" viewBox="0 0 12 12"><path d="M1.6 1.6 L10.4 10.4 M10.4 1.6 L1.6 10.4" stroke="#e4737a" stroke-width="2.7" fill="none"/></svg>
<div class="a pill" style="left:1379.2px;top:689.5px;width:80.6px"></div>
<div class="a pill" style="left:1464.2px;top:689.5px;width:91.6px"></div>
<svg class="a" style="left:1395.5px;top:701.2px" width="13" height="11" viewBox="0 0 13 11"><path d="M8.4 1.6 H2.2 Q0.9 1.6 0.9 2.9 V8.8 Q0.9 10.1 2.2 10.1 H8.2 Q9.5 10.1 9.5 8.8 V6.6" fill="none" stroke="#bcbcbc" stroke-width="1.2"/><path d="M4.4 5.6 L9.6 0.5 L11.7 2.6 L6.5 7.8 H4.4 Z" fill="#bcbcbc"/><path d="M10.3 0 L11 -0.6 L12.9 1.3 L12.2 2 Z" fill="#bcbcbc" transform="translate(0,0.7)"/></svg>
<div class="t pt" style="left:1412px;top:699.5px;color:#b7b7b7">Editar</div>
<svg class="a" style="left:1481px;top:701.0px" width="11" height="11" viewBox="0 0 11 11"><circle cx="5.5" cy="5.5" r="4.3" fill="none" stroke="#bcbcbc" stroke-width="1.4"/><path d="M2.6 8.4 L8.4 2.6" stroke="#bcbcbc" stroke-width="1.4"/></svg>
<div class="t pt" style="left:1495.5px;top:699.5px;color:#b7b7b7">Eliminar</div>
<div class="a hr" style="top:858px"></div>
<div class="t td" style="left:341px;top:798px">7</div>
<div class="t td b" style="left:455px;top:788px">Centro de Salud<br>Écija</div>
<div class="t td" style="left:624px;top:778px">Centro de Salud<br>Écija Virgen del<br>Valle</div>
<div class="t td" style="left:792px;top:798px">Écija</div>
<div class="t td" style="left:953px;top:798px">Sevilla</div>
<div class="t td" style="left:1110px;top:788px">Administración<br>pública</div>
<svg class="a" style="left:1244.5px;top:801.5px" width="12" height="12" viewBox="0 0 12 12"><path d="M1.6 1.6 L10.4 10.4 M10.4 1.6 L1.6 10.4" stroke="#e4737a" stroke-width="2.7" fill="none"/></svg>
<div class="a pill" style="left:1379.2px;top:790.5px;width:80.6px"></div>
<div class="a pill" style="left:1464.2px;top:790.5px;width:91.6px"></div>
<svg class="a" style="left:1395.5px;top:802.2px" width="13" height="11" viewBox="0 0 13 11"><path d="M8.4 1.6 H2.2 Q0.9 1.6 0.9 2.9 V8.8 Q0.9 10.1 2.2 10.1 H8.2 Q9.5 10.1 9.5 8.8 V6.6" fill="none" stroke="#bcbcbc" stroke-width="1.2"/><path d="M4.4 5.6 L9.6 0.5 L11.7 2.6 L6.5 7.8 H4.4 Z" fill="#bcbcbc"/><path d="M10.3 0 L11 -0.6 L12.9 1.3 L12.2 2 Z" fill="#bcbcbc" transform="translate(0,0.7)"/></svg>
<div class="t pt" style="left:1412px;top:800.5px;color:#b7b7b7">Editar</div>
<svg class="a" style="left:1481px;top:802.0px" width="11" height="11" viewBox="0 0 11 11"><circle cx="5.5" cy="5.5" r="4.3" fill="none" stroke="#bcbcbc" stroke-width="1.4"/><path d="M2.6 8.4 L8.4 2.6" stroke="#bcbcbc" stroke-width="1.4"/></svg>
<div class="t pt" style="left:1495.5px;top:800.5px;color:#b7b7b7">Eliminar</div>
<div class="a hr" style="top:939px"></div>
<div class="t td" style="left:341px;top:889px">3</div>
<div class="t td b" style="left:455px;top:879px">Centro deportivo<br>de Écija</div>
<div class="t td" style="left:624px;top:879px">Centro deportivo de<br>Écija</div>
<div class="t td" style="left:792px;top:889px">Écija</div>
<div class="t td" style="left:953px;top:889px">Sevilla</div>
<div class="t td" style="left:1110px;top:879px">Administración<br>pública</div>
<svg class="a" style="left:1244.5px;top:892.5px" width="12" height="12" viewBox="0 0 12 12"><path d="M1.6 1.6 L10.4 10.4 M10.4 1.6 L1.6 10.4" stroke="#e4737a" stroke-width="2.7" fill="none"/></svg>
<div class="a pill" style="left:1379.2px;top:881.5px;width:80.6px"></div>
<div class="a pill" style="left:1464.2px;top:881.5px;width:91.6px"></div>
<svg class="a" style="left:1395.5px;top:893.2px" width="13" height="11" viewBox="0 0 13 11"><path d="M8.4 1.6 H2.2 Q0.9 1.6 0.9 2.9 V8.8 Q0.9 10.1 2.2 10.1 H8.2 Q9.5 10.1 9.5 8.8 V6.6" fill="none" stroke="#bcbcbc" stroke-width="1.2"/><path d="M4.4 5.6 L9.6 0.5 L11.7 2.6 L6.5 7.8 H4.4 Z" fill="#bcbcbc"/><path d="M10.3 0 L11 -0.6 L12.9 1.3 L12.2 2 Z" fill="#bcbcbc" transform="translate(0,0.7)"/></svg>
<div class="t pt" style="left:1412px;top:891.5px;color:#b7b7b7">Editar</div>
<svg class="a" style="left:1481px;top:893.0px" width="11" height="11" viewBox="0 0 11 11"><circle cx="5.5" cy="5.5" r="4.3" fill="none" stroke="#bcbcbc" stroke-width="1.4"/><path d="M2.6 8.4 L8.4 2.6" stroke="#bcbcbc" stroke-width="1.4"/></svg>
<div class="t pt" style="left:1495.5px;top:891.5px;color:#b7b7b7">Eliminar</div>
<div class="a" style="left:1638px;top:0;width:9px;height:912px;background:linear-gradient(90deg,rgba(241,241,241,0),#f1f1f1)"></div>
<div class="a" style="left:1647px;top:0;width:5px;height:912px;background:#f1f1f1"></div>
<div class="a" style="left:1649px;top:17px;width:3px;height:351px;background:#c1c1c1"></div>
<div class="a rbox" style="left:22.7px;top:139.1px;width:138px;height:46.8px"></div>
<div class="a rbox" style="left:23.6px;top:201.3px;width:89px;height:43.4px"></div>
<div class="a rbox" style="left:1374.4px;top:501.2px;width:91.5px;height:68.5px"></div>
<svg class="a" style="left:0;top:0;filter:drop-shadow(1.5px 2px 3px rgba(0,0,0,.45))" width="1652" height="912" viewBox="0 0 1652 912">
<g fill="#fe0000" stroke="none">
<path d="M337.6 138.6 L338.2 142.8 L189.57 163.31 L190.34 168.87 L165.9 164.4 L188.22 153.49 L188.99 159.05 Z"/>
<path d="M253.7 220.5 V224.9 L141.8 225.7 V231.3 L118 223.5 L141.8 215.7 V221.1 Z"/>
<path d="M1331.31 412.63 L1369.71 477.28 L1375.08 474.09 L1379.4 497.7 L1360.72 482.61 L1366.09 479.42 L1327.69 414.77 Z"/>
</g></svg>
<div class="t red" style="left:342px;top:117px;font-size:34px;line-height:36px">1º</div>
<div class="t red" style="left:261px;top:200px;font-size:34px;line-height:36px">2º</div>
<div class="t red" style="left:1309px;top:378px;font-size:34px;line-height:36px">3º</div>
</body></html>
